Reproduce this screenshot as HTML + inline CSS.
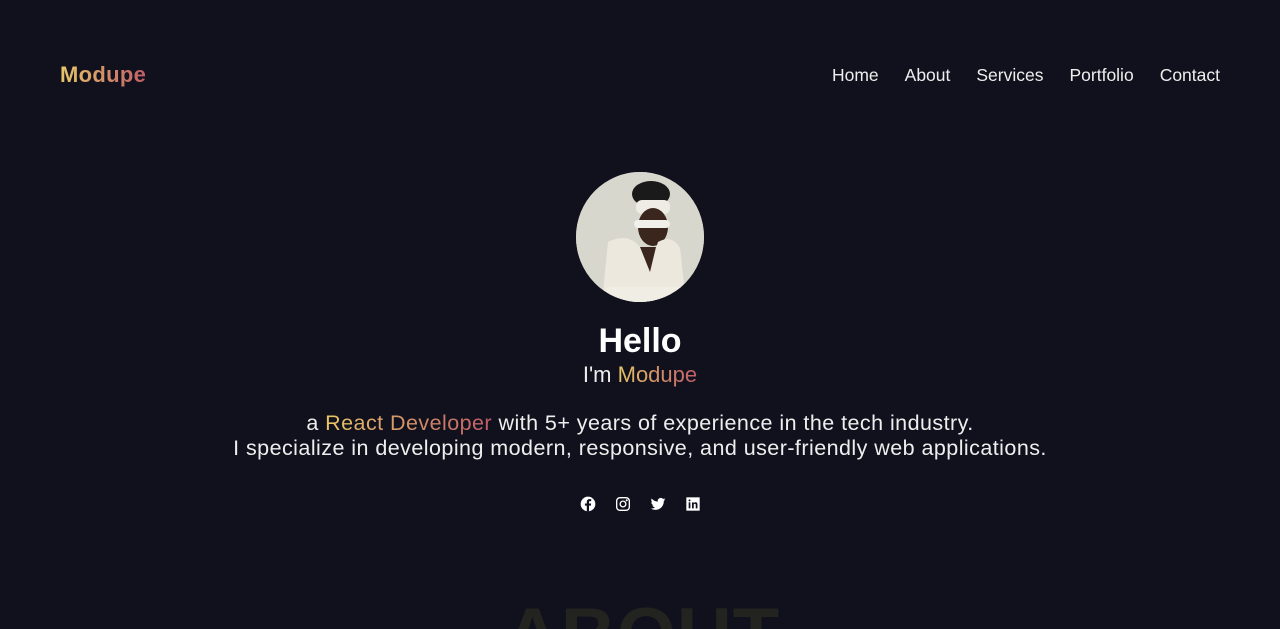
<!DOCTYPE html>
<html><head><meta charset="utf-8"><style>
*{margin:0;padding:0;box-sizing:border-box}
html,body{width:1280px;height:629px;overflow:hidden;background:#11111d;font-family:"Liberation Sans",sans-serif;color:#f2f2f2;position:relative}
.grad{background:linear-gradient(90deg,#e8c768,#c05c68);-webkit-background-clip:text;background-clip:text;color:transparent}
.logo{position:absolute;left:60px;top:62px;font-size:22px;font-weight:bold;letter-spacing:0.3px}
nav{position:absolute;right:60px;top:65px;font-size:17.5px;display:flex;gap:26px;color:#eee}
.avatar{position:absolute;left:576px;top:172px;width:128px;height:130px;border-radius:50%;overflow:hidden;background:#d6d5cc}
h1{position:absolute;left:0;width:1280px;top:322px;text-align:center;font-size:34px;font-weight:bold;color:#fff}
.im{position:absolute;left:0;width:1280px;top:362px;text-align:center;font-size:22px;color:#eee}
.desc{position:absolute;left:0;width:1280px;top:411px;text-align:center;font-size:21.5px;line-height:25px;letter-spacing:0.45px;color:#eee}
.soc{position:absolute;left:580px;top:496px;display:flex;gap:19px}
.soc svg{width:16px;height:16px}
.aboutwrap{position:absolute;left:0;top:580px;width:1280px;height:49px;overflow:hidden}
.about{position:absolute;left:505px;top:18px;font-size:76px;line-height:1;font-weight:bold;color:#23231f;letter-spacing:1px;white-space:nowrap}
</style></head><body>
<div class="logo grad">Modupe</div>
<nav><span>Home</span><span>About</span><span>Services</span><span>Portfolio</span><span>Contact</span></nav>
<div class="avatar"><svg width="128" height="130" viewBox="0 0 128 130">
<rect width="128" height="130" fill="#d8d7ce"/>
<ellipse cx="75" cy="22" rx="19" ry="13" fill="#1a1a1a"/>
<rect x="60" y="28" width="34" height="14" rx="6" fill="#eeece4"/>
<ellipse cx="77" cy="55" rx="15" ry="19" fill="#3a261c"/>
<rect x="58" y="48" width="36" height="8" rx="4" fill="#f2f0ea"/>
<path d="M26 130 L32 70 Q52 60 64 75 L74 95 L82 70 Q96 62 104 76 L110 130 Z" fill="#ece8de"/>
<path d="M64 75 L74 100 L80 75 Z" fill="#3a261c"/>
<rect x="30" y="115" width="84" height="15" fill="#f0ede5"/>
</svg></div>
<h1>Hello</h1>
<div class="im">I'm <span class="grad">Modupe</span></div>
<div class="desc">a <span class="grad">React Developer</span> with 5+ years of experience in the tech industry.<br>I specialize in developing modern, responsive, and user-friendly web applications.</div>
<div class="soc">
<svg viewBox="0 0 24 24"><circle cx="12" cy="12" r="11" fill="#fff"/><path d="M13.5 23V14.5h2.8l.4-3.3h-3.2V9.2c0-.9.3-1.6 1.6-1.6h1.7V4.7c-.3 0-1.3-.1-2.5-.1-2.5 0-4.1 1.5-4.1 4.2v2.4H7.4v3.3h2.8V23z" fill="#11111d"/></svg>
<svg viewBox="0 0 24 24" fill="none" stroke="#fff" stroke-width="2"><rect x="2.5" y="2.5" width="19" height="19" rx="5"/><circle cx="12" cy="12" r="4.3"/><circle cx="17.6" cy="6.4" r="0.6" fill="#fff"/></svg>
<svg viewBox="0 0 24 24"><path fill="#fff" d="M23 5.1c-.8.4-1.7.6-2.6.7.9-.6 1.6-1.4 2-2.5-.9.5-1.9.9-2.9 1.1A4.5 4.5 0 0 0 11.8 8.5 12.8 12.8 0 0 1 2.5 3.8a4.5 4.5 0 0 0 1.4 6 4.4 4.4 0 0 1-2-.6v.1c0 2.2 1.6 4 3.6 4.4-.7.2-1.4.2-2 .1.6 1.8 2.2 3.1 4.2 3.1A9 9 0 0 1 1 18.8 12.8 12.8 0 0 0 7.9 20.8c8.3 0 12.8-6.9 12.8-12.8v-.6c.9-.6 1.7-1.4 2.3-2.3z"/></svg>
<svg viewBox="0 0 24 24"><rect x="2" y="2" width="20" height="20" fill="#fff"/><rect x="5.5" y="9.5" width="2.6" height="9" fill="#11111d"/><circle cx="6.8" cy="6.6" r="1.5" fill="#11111d"/><path d="M10.5 9.5h2.5v1.3c.5-.9 1.5-1.5 2.8-1.5 2.3 0 2.9 1.5 2.9 3.6v5.6h-2.6v-5c0-1.1-.3-1.9-1.4-1.9s-1.6.8-1.6 1.9v5h-2.6z" fill="#11111d"/></svg>
</div>
<div class="aboutwrap"><div class="about">ABOUT</div></div>
</body></html>
